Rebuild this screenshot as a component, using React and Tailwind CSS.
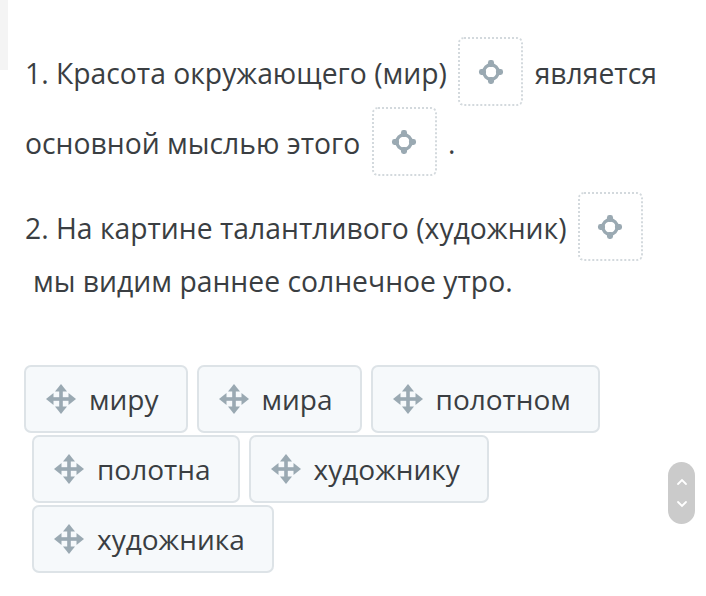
import React from "react";

const DropIcon = () => (
  <svg width="28" height="28" viewBox="0 0 28 28" fill="none">
    <circle cx="14" cy="14" r="7.2" stroke="#9aa9b2" strokeWidth="3.4" />
    <rect x="11" y="2" width="6" height="7" rx="2.4" fill="#9aa9b2" />
    <rect x="11" y="19" width="6" height="7" rx="2.4" fill="#9aa9b2" />
    <rect x="2" y="11" width="7" height="6" rx="2.4" fill="#9aa9b2" />
    <rect x="19" y="11" width="7" height="6" rx="2.4" fill="#9aa9b2" />
  </svg>
);

const MoveIcon = () => (
  <svg width="32" height="32" viewBox="0 0 32 32" fill="#9aa9b2">
    <rect x="14.2" y="6" width="3.6" height="20" />
    <rect x="6" y="14.2" width="20" height="3.6" />
    <polygon points="16,1 10,8.5 22,8.5" />
    <polygon points="16,31 10,23.5 22,23.5" />
    <polygon points="1,16 8.5,10 8.5,22" />
    <polygon points="31,16 23.5,10 23.5,22" />
  </svg>
);

const Drop = () => (
  <span className="inline-block overflow-hidden align-[-22px] w-[65px] h-[69px] rounded-[6px] border-2 border-dotted border-[#d3d9dd] bg-white mx-[4px]">
    <span className="flex w-full h-full items-center justify-center">
      <DropIcon />
    </span>
  </span>
);

const Chip = ({ label }) => (
  <div className="flex items-center h-[68px] pl-[19px] pr-[27px] rounded-[7px] border-2 border-[#dde3e7] bg-[#f6f9fb]">
    <MoveIcon />
    <span className="ml-[12px] text-[28px] text-[#3a3e42]">{label}</span>
  </div>
);

export default function App() {
  return (
    <div
      className="relative w-[706px] h-[596px] bg-white overflow-hidden"
      style={{ fontFamily: '"Open Sans", "Noto Sans", sans-serif' }}
    >
      <div className="absolute left-0 top-0 w-[8px] h-[70px] bg-[#f4f4f4]" />
      <div className="pt-[37px] pl-[25px] pr-[30px] text-[28.3px] text-[#3a3e42]">
        <p className="leading-[68px]">
          1. Красота окружающего (мир) <Drop /> является основной мыслью этого <Drop /> .
        </p>
        <p className="mt-[15px]">
          <span className="block leading-[68px]">
            2. На картине талантливого (художник) <Drop />
          </span>
          <span className="block leading-[38px] pl-[8px]">мы видим раннее солнечное утро.</span>
        </p>
      </div>
      <div className="mt-[65px] flex flex-col gap-[2px]">
        <div className="flex gap-[9px] pl-[24px]">
          <Chip label="миру" />
          <Chip label="мира" />
          <Chip label="полотном" />
        </div>
        <div className="flex gap-[9px] pl-[32px]">
          <Chip label="полотна" />
          <Chip label="художнику" />
        </div>
        <div className="flex gap-[9px] pl-[32px]">
          <Chip label="художника" />
        </div>
      </div>
      <div className="absolute left-[668px] top-[462px] w-[27px] h-[62px] rounded-full bg-[#cbcbcb] flex flex-col items-center justify-center gap-[14px]">
        <svg width="12" height="8" viewBox="0 0 12 8" fill="none">
          <path d="M2 6 L6 2 L10 6" stroke="white" strokeWidth="1.8" strokeLinecap="round" />
        </svg>
        <svg width="12" height="8" viewBox="0 0 12 8" fill="none">
          <path d="M2 2 L6 6 L10 2" stroke="white" strokeWidth="1.8" strokeLinecap="round" />
        </svg>
      </div>
    </div>
  );
}
